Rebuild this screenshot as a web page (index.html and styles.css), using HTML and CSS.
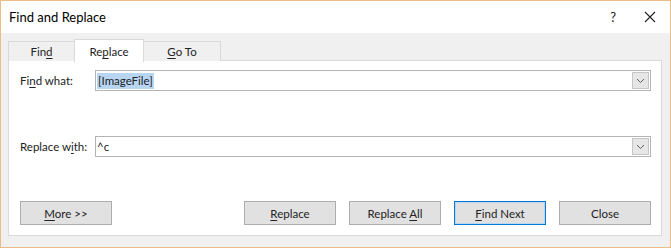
FILE: index.html
```html
<!DOCTYPE html>
<html>
<head>
<meta charset="utf-8">
<link rel="stylesheet" href="styles.css">
</head>
<body>
<div class="window">
  <div class="titlebar">
    <span class="title">Find and Replace</span>
    <div class="controls">
      <span class="help">?</span>
      <svg class="close-x" width="12" height="12" viewBox="0 0 12 12"><path d="M1 1L11 11M11 1L1 11" stroke="#222" stroke-width="1.1" fill="none"/></svg>
    </div>
  </div>
  <div class="body">
    <div class="tabs">
      <div class="tab">Fin<u>d</u></div>
      <div class="tab active">Re<u>p</u>lace</div>
      <div class="tab"><u>G</u>o To</div>
    </div>
    <div class="panel">
      <div class="row">
        <label class="label">Fi<u>n</u>d what:</label>
        <div class="combo">
          <div class="combo-text"><span class="sel">[ImageFile]</span></div>
          <div class="drop"><svg width="9" height="6" viewBox="0 0 9 6"><path d="M1 1L4.5 4.5L8 1" stroke="#606060" stroke-width="1" fill="none"/></svg></div>
        </div>
      </div>
      <div class="row row2">
        <label class="label">Replace w<u>i</u>th:</label>
        <div class="combo">
          <div class="combo-text">^c</div>
          <div class="drop"><svg width="9" height="6" viewBox="0 0 9 6"><path d="M1 1L4.5 4.5L8 1" stroke="#606060" stroke-width="1" fill="none"/></svg></div>
        </div>
      </div>
      <div class="buttons">
        <button class="btn"><u>M</u>ore &gt;&gt;</button>
        <div class="spacer"></div>
        <button class="btn"><u>R</u>eplace</button>
        <button class="btn">Replace <u>A</u>ll</button>
        <button class="btn default"><u>F</u>ind Next</button>
        <button class="btn">Close</button>
      </div>
    </div>
  </div>
</div>
</body>
</html>
```
FILE: styles.css
```css
* { box-sizing: border-box; }
html, body { margin: 0; padding: 0; background: #ffffff; }
body {
  font-family: "Lato", "Open Sans", "Liberation Sans", sans-serif;
  font-size: 11.5px;
  color: #222222;
}
u { text-decoration: underline; text-underline-offset: 2px; text-decoration-thickness: 1px; }
.window {
  width: 671px;
  height: 248px;
  border: 1px solid #ebbd85;
  display: flex;
  flex-direction: column;
  background: #f0f0f0;
}
.titlebar {
  height: 32px;
  background: #ffffff;
  display: flex;
  align-items: center;
  padding: 0 0 0 8px;
  flex: none;
}
.title { font-size: 13px; color: #000; flex: 1; }
.controls { display: flex; align-items: center; }
.help { font-size: 13px; color: #222; margin-right: 28px; }
.close-x { margin-right: 14px; }
.body {
  flex: 1;
  padding: 6px 8px 0 7px;
  display: flex;
  flex-direction: column;
}
.tabs { display: flex; height: 22px; flex: none; position: relative; z-index: 1; }
.tab {
  margin-top: 2px;
  height: 20px;
  border: 1px solid #d9d9d9;
  border-bottom: none;
  background: #f0f0f0;
  display: flex;
  align-items: center;
  justify-content: center;
}
.tab:nth-child(1) { width: 66px; border-right: none; }
.tab:nth-child(2) { width: 70px; }
.tab:nth-child(3) { width: 77px; border-left: none; }
.tab.active {
  margin-top: 0;
  height: 23px;
  background: #ffffff;
  border-color: #d9d9d9;
}
.panel {
  height: 176px;
  background: #ffffff;
  border: 1px solid #d9d9d9;
  margin-top: -1px;
  padding: 9px 10px 10px 11px;
  display: flex;
  flex-direction: column;
}
.row { display: flex; align-items: center; height: 21px; }
.row2 { margin-top: 45px; }
.label { width: 75px; flex: none; }
.combo {
  flex: 1;
  height: 21px;
  border: 1px solid #b4b4b4;
  display: flex;
  background: #fff;
}
.combo-text { flex: 1; padding-left: 1px; display: flex; align-items: center; }
.sel { background: #b8d6f3; padding: 0 1px; line-height: 16px; }
.drop {
  width: 17px;
  margin: 1px;
  background: #e6e6e6;
  border: 1px solid #c6c6c6;
  display: flex;
  align-items: center;
  justify-content: center;
}
.buttons { display: flex; margin-top: 44px; gap: 13px; }
.spacer { flex: 1; }
.btn {
  width: 92px;
  height: 24px;
  background: #e1e1e1;
  border: 1px solid #adadad;
  font-family: inherit;
  font-size: 11.5px;
  color: #222222;
  padding: 0;
}
.btn.default { border: 1px solid #0078d7; box-shadow: inset 0 0 0 1px #bcd7ee; }
```
